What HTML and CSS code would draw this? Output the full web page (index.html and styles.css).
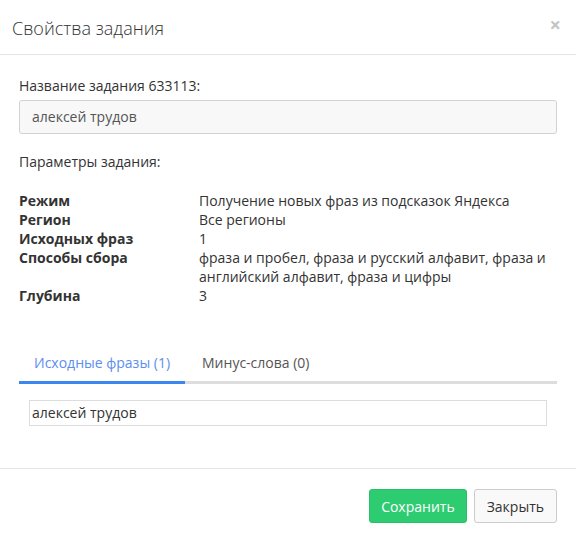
FILE: index.html
```html
<!DOCTYPE html>
<html lang="ru">
<head>
<meta charset="utf-8">
<link rel="stylesheet" href="styles.css">
</head>
<body>
<div class="modal">
  <div class="modal-header">
    <h4 class="modal-title">Свойства задания</h4>
    <span class="close">×</span>
  </div>
  <div class="modal-body">
    <label class="label">Название задания 633113:</label>
    <div class="input">алексей трудов</div>
    <div class="section">Параметры задания:</div>
    <div class="params">
      <div class="key">Режим</div><div class="val">Получение новых фраз из подсказок Яндекса</div>
      <div class="key">Регион</div><div class="val">Все регионы</div>
      <div class="key">Исходных фраз</div><div class="val">1</div>
      <div class="key">Способы сбора</div><div class="val">фраза и пробел, фраза и русский алфавит, фраза и английский алфавит, фраза и цифры</div>
      <div class="key">Глубина</div><div class="val">3</div>
    </div>
    <div class="tabs">
      <div class="tab active">Исходные фразы (1)</div>
      <div class="tab">Минус-слова (0)</div>
    </div>
    <div class="tab-pane">
      <div class="phrase">алексей трудов</div>
    </div>
  </div>
  <div class="modal-footer">
    <button class="btn btn-save">Сохранить</button>
    <button class="btn btn-close">Закрыть</button>
  </div>
</div>
</body>
</html>
```
FILE: styles.css
```css
html, body {
  margin: 0;
  padding: 0;
  background: #fff;
}
body {
  font-family: "Open Sans", "DejaVu Sans", sans-serif;
  font-size: 14px;
  color: #333;
}
.modal {
  width: 576px;
}
.modal-header {
  display: flex;
  justify-content: space-between;
  align-items: center;
  height: 55px;
  box-sizing: border-box;
  padding: 1px 15px 0 12px;
  border-bottom: 1px solid #e5e5e5;
}
.modal-title {
  margin: 0;
  font-size: 18px;
  font-weight: 300;
  color: #333;
}
.close {
  font-size: 20px;
  font-weight: 700;
  color: #c4c4c4;
  line-height: 1;
  margin-top: -6px;
}
.modal-body {
  padding: 21px 19px 42px 19px;
}
.label {
  display: block;
  line-height: 20px;
  margin-bottom: 4px;
}
.input {
  height: 34px;
  box-sizing: border-box;
  border: 1px solid #d2d2d2;
  border-radius: 3px;
  background: #f8f8f8;
  padding: 0 12px;
  line-height: 32px;
  color: #555;
}
.section {
  margin-top: 18px;
  line-height: 20px;
}
.params {
  display: grid;
  grid-template-columns: 180px 1fr;
  margin-top: 19px;
  line-height: 19px;
}
.key {
  font-weight: 700;
}
.val {
  color: #333;
}
.tabs {
  display: flex;
  margin-top: 38px;
  border-bottom: 3px solid #ddd;
}
.tab {
  padding: 10px 15px 8px 15px;
  margin-right: 2px;
  line-height: 20px;
  color: #555;
  margin-bottom: -3px;
  border-bottom: 3px solid transparent;
}
.tab.active {
  color: #5b8ef0;
  border-bottom-color: #3b86f0;
}
.tab-pane {
  padding: 16px 10px 0 10px;
}
.phrase {
  height: 26px;
  box-sizing: border-box;
  border: 1px solid #ddd;
  padding: 0 2px;
  line-height: 24px;
  color: #333;
}
.modal-footer {
  display: flex;
  justify-content: flex-end;
  gap: 7px;
  padding: 20px 19px 20px 19px;
  border-top: 1px solid #e5e5e5;
}
.btn {
  font-family: "Open Sans", "DejaVu Sans", sans-serif;
  font-size: 14px;
  height: 34px;
  padding: 0 12px;
  border-radius: 3px;
  cursor: pointer;
}
.btn-save {
  background: #2ecc71;
  border: 1px solid #29c06a;
  color: #fff;
  padding: 0 11px;
}
.btn-close {
  background: #f9f9f9;
  border: 1px solid #ccc;
  color: #333;
}
```
